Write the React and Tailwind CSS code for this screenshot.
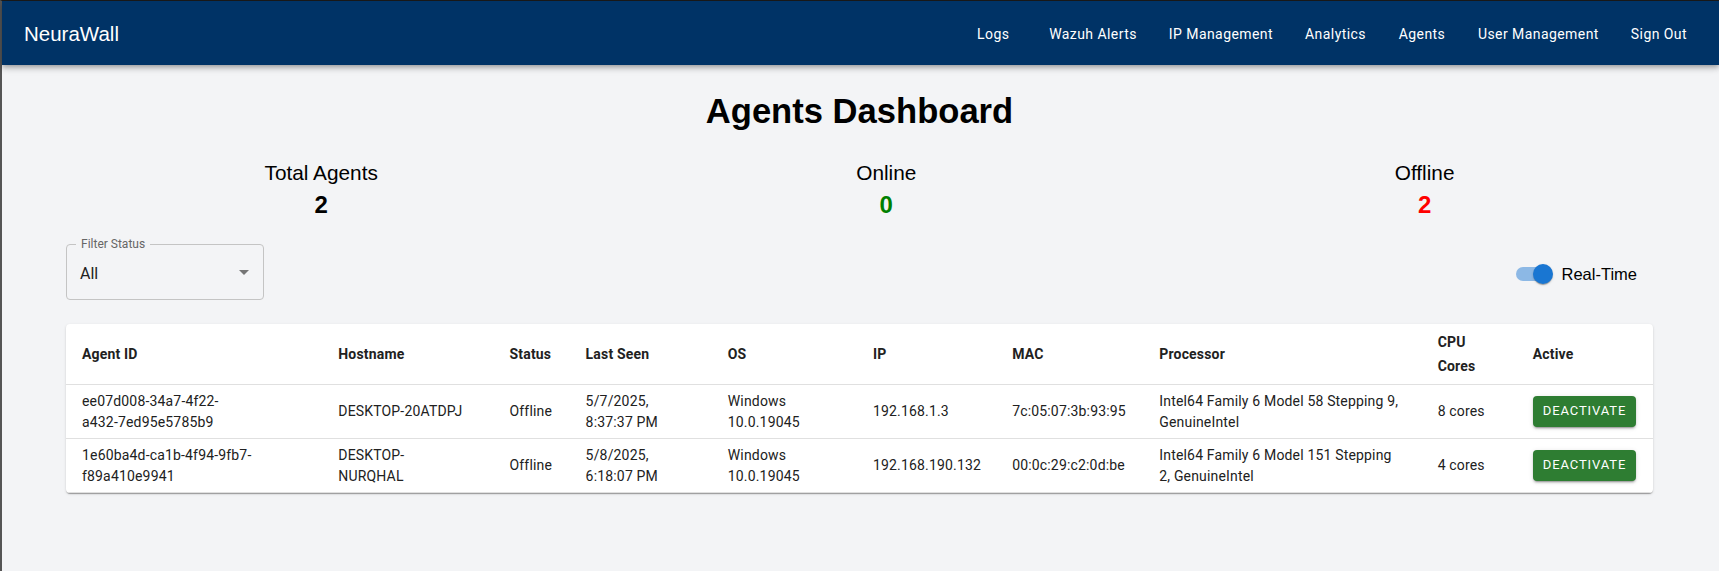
import React, { useState } from 'react'

const navLinks = ['Logs', 'Wazuh Alerts', 'IP Management', 'Analytics', 'Agents', 'User Management', 'Sign Out']

// line breaks kept as in the listing
const agents = [
  {
    id: 'ee07d008-34a7-4f22-\na432-7ed95e5785b9',
    hostname: 'DESKTOP-20ATDPJ',
    status: 'Offline',
    lastSeen: '5/7/2025,\n8:37:37 PM',
    os: 'Windows\n10.0.19045',
    ip: '192.168.1.3',
    mac: '7c:05:07:3b:93:95',
    processor: 'Intel64 Family 6 Model 58 Stepping 9,\nGenuineIntel',
    cores: 8,
  },
  {
    id: '1e60ba4d-ca1b-4f94-9fb7-\nf89a410e9941',
    hostname: 'DESKTOP-\nNURQHAL',
    status: 'Offline',
    lastSeen: '5/8/2025,\n6:18:07 PM',
    os: 'Windows\n10.0.19045',
    ip: '192.168.190.132',
    mac: '00:0c:29:c2:0d:be',
    processor: 'Intel64 Family 6 Model 151 Stepping\n2, GenuineIntel',
    cores: 4,
  },
]

const columns = [
  { label: 'Agent ID', w: 'w-[256px]' },
  { label: 'Hostname', w: 'w-[171px]' },
  { label: 'Status', w: 'w-[76px]' },
  { label: 'Last Seen', w: 'w-[142px]' },
  { label: 'OS', w: 'w-[145px]' },
  { label: 'IP', w: 'w-[139px]' },
  { label: 'MAC', w: 'w-[147px]' },
  { label: 'Processor', w: 'w-[278px]' },
  { label: 'CPU\nCores', w: 'w-[95px]' },
  { label: 'Active', w: 'w-[136px]' },
]

const cell = 'px-4 py-[6px] leading-[20.5px] align-middle border-b border-[#e0e0e0] whitespace-pre-line'

const App = () => {
  const [realTime, setRealTime] = useState(true)

  const total = agents.length
  const online = agents.filter((a) => a.status === 'Online').length
  const offline = total - online

  return (
    <div className="min-h-screen bg-[#f3f4f6] border-t border-l-2 border-t-[#1c1c1c] border-l-[#555555] font-['Liberation_Sans',Arial,sans-serif]">
      {/* Navbar */}
      <header className="h-16 bg-[#003366] text-white flex items-center justify-between pl-[22px] pr-6 shadow-[0px_2px_4px_-1px_rgba(0,0,0,0.2),0px_4px_5px_0px_rgba(0,0,0,0.14),0px_1px_10px_0px_rgba(0,0,0,0.12)] relative z-10">
        <div className="text-[20.5px] leading-8 pt-[2px]">NeuraWall</div>
        <nav className="flex items-center gap-4 font-['Roboto',sans-serif] pt-[2px]">
          {navLinks.map((link) => (
            <button
              key={link}
              className="min-w-[64px] px-2 py-[6px] text-[14px] leading-[24.5px] tracking-[0.43px] font-normal text-white text-center rounded"
            >
              {link}
            </button>
          ))}
        </nav>
      </header>

      <main className="pl-[64px] pr-[66px] pt-6 pb-10">
        <h1 className="text-center text-[34.6px] leading-[42px] font-bold text-black pt-[1px]">Agents Dashboard</h1>

        {/* Stats */}
        <div className="w-[1190px] mx-auto mt-[25px] flex justify-between text-center">
          <div>
            <div className="text-[20.8px] leading-8 text-black">Total Agents</div>
            <div className="text-[24px] leading-8 font-bold text-black">{total}</div>
          </div>
          <div>
            <div className="text-[20.8px] leading-8 text-black">Online</div>
            <div className="text-[24px] leading-8 font-bold text-[#008000]">{online}</div>
          </div>
          <div>
            <div className="text-[20.8px] leading-8 text-black">Offline</div>
            <div className="text-[24px] leading-8 font-bold text-[#ff0000]">{offline}</div>
          </div>
        </div>

        {/* Filter + toggle */}
        <div className="mt-[23px] flex items-center justify-between">
          <div className="relative w-[198px] h-[56px] border border-[#c4c4c4] rounded font-['Roboto',sans-serif] flex items-center">
            <span className="absolute left-[9px] -top-[9px] px-[5px] bg-[#f3f4f6] text-[12px] leading-[16px] text-[#666666]">
              Filter Status
            </span>
            <span className="pl-[13px] pt-[4px] text-[16px] text-[#212121]">All</span>
            <svg className="absolute right-[7px] top-[15px] w-6 h-6 text-[#757575]" viewBox="0 0 24 24" fill="currentColor">
              <path d="M7 10l5 5 5-5z" />
            </svg>
          </div>

          <label className="flex items-center mr-4 mt-[3px] cursor-pointer" onClick={() => setRealTime(!realTime)}>
            <div className="relative w-[58px] h-[38px]">
              <div className={`absolute left-3 top-3 w-[34px] h-[14px] rounded-full ${realTime ? 'bg-[#8cb8e5]' : 'bg-[#b0b0b0]'}`} />
              <div
                className={`absolute top-[9px] w-5 h-5 rounded-full shadow-[0px_2px_1px_-1px_rgba(0,0,0,0.2),0px_1px_1px_0px_rgba(0,0,0,0.14),0px_1px_3px_0px_rgba(0,0,0,0.12)] ${realTime ? 'left-[29px] bg-[#1976d2]' : 'left-[9px] bg-white'}`}
              />
            </div>
            <span className="text-[16.5px] leading-6 text-black">Real-Time</span>
          </label>
        </div>

        {/* Table */}
        <div className="mt-[24px] bg-white rounded overflow-hidden shadow-[0px_2px_1px_-1px_rgba(0,0,0,0.2),0px_1px_1px_0px_rgba(0,0,0,0.14),0px_1px_3px_0px_rgba(0,0,0,0.12)] font-['Roboto',sans-serif]">
          <table className="w-full table-fixed border-collapse text-[14px] tracking-[0.17px] text-[#212121]">
            <thead>
              <tr>
                {columns.map((col) => (
                  <th
                    key={col.label}
                    className={`${col.w} text-left align-middle font-bold leading-6 px-4 py-[6px] border-b border-[#e0e0e0] whitespace-pre-line`}
                  >
                    {col.label}
                  </th>
                ))}
              </tr>
            </thead>
            <tbody>
              {agents.map((agent) => (
                <tr key={agent.id}>
                  <td className={cell}>{agent.id}</td>
                  <td className={cell}>{agent.hostname}</td>
                  <td className={cell}>{agent.status}</td>
                  <td className={cell}>{agent.lastSeen}</td>
                  <td className={cell}>{agent.os}</td>
                  <td className={cell}>{agent.ip}</td>
                  <td className={cell}>{agent.mac}</td>
                  <td className={cell}>{agent.processor}</td>
                  <td className={cell}>{agent.cores} cores</td>
                  <td className={cell}>
                    <button className="bg-[#2e7d32] text-white text-[13px] font-normal uppercase tracking-[0.9px] leading-[22.75px] px-[10px] py-1 rounded shadow-[0px_3px_1px_-2px_rgba(0,0,0,0.2),0px_2px_2px_0px_rgba(0,0,0,0.14),0px_1px_5px_0px_rgba(0,0,0,0.12)]">
                      Deactivate
                    </button>
                  </td>
                </tr>
              ))}
            </tbody>
          </table>
        </div>
      </main>
    </div>
  )
}

export default App
